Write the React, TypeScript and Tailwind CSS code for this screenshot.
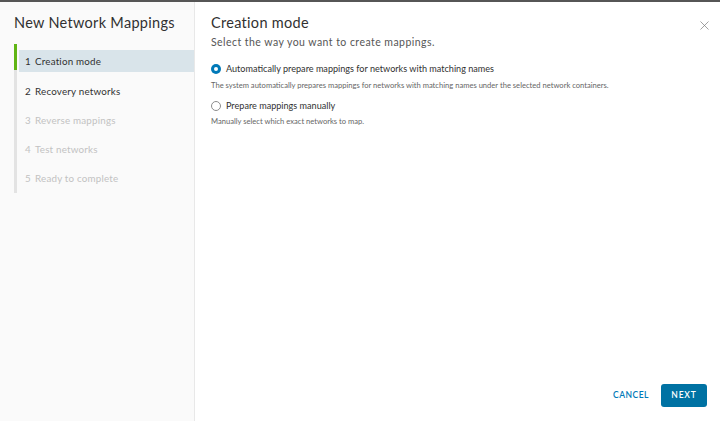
import { X } from 'lucide-react';

const steps = [
  { n: 1, label: 'Creation mode', state: 'active' },
  { n: 2, label: 'Recovery networks', state: 'enabled' },
  { n: 3, label: 'Reverse mappings', state: 'disabled' },
  { n: 4, label: 'Test networks', state: 'disabled' },
  { n: 5, label: 'Ready to complete', state: 'disabled' },
];

export default function App() {
  return (
    <div
      className="w-[720px] h-[421px] flex flex-col bg-white border-t-2 border-[#565656] overflow-hidden"
      style={{ fontFamily: 'Lato, "Liberation Sans", sans-serif' }}
    >
      <div className="flex flex-1 min-h-0">
        {/* Left nav */}
        <div className="w-[195px] shrink-0 bg-[#fafafa] border-r border-[#e8e8e8] pt-[10px]">
          <h1 className="pl-[14px] whitespace-nowrap text-[14.5px] leading-[22px] text-[#313131] tracking-[0.3px]">
            New Network Mappings
          </h1>
          <div className="mt-[13px] ml-[14px] border-l-[3px] border-[#e3e3e3] flex flex-col">
            {steps.map((s) => (
              <div key={s.n} className="relative h-[29.25px] flex items-center">
                {s.state === 'active' && (
                  <>
                    <div className="absolute -left-[3px] -top-[3px] w-[3px] h-[26px] bg-[#60b515]" />
                    <div className="absolute left-[2px] right-0 top-[3px] bottom-[4px] bg-[#d9e4ea]" />
                  </>
                )}
                <span
                  className={`relative pl-[8px] whitespace-nowrap text-[9.8px] tracking-[0.2px] ${
                    s.state === 'disabled' ? 'text-[#c2c2c2]' : 'text-[#313131]'
                  }`}
                >
                  <span className="inline-block w-[10px]">{s.n}</span>
                  {s.label}
                </span>
              </div>
            ))}
          </div>
        </div>

        {/* Content */}
        <div className="flex-1 flex flex-col pl-[16px] pr-[13px] pt-[10px] pb-[14px]">
          <div className="flex items-start justify-between">
            <h2 className="text-[14.5px] leading-[22px] text-[#313131] tracking-[0.3px]">Creation mode</h2>
            <X className="w-[15px] h-[15px] mt-[6px] -mr-[5px] text-[#777]" strokeWidth={1.1} />
          </div>
          <p className="text-[10.5px] leading-[16px] text-[#565656] tracking-[0.45px]">
            Select the way you want to create mappings.
          </p>

          <div className="mt-[13px] flex items-center gap-[5px]">
            <span className="w-[10px] h-[10px] rounded-full bg-[#0079b8] flex items-center justify-center">
              <span className="w-[4px] h-[4px] rounded-full bg-white" />
            </span>
            <span className="text-[9.1px] leading-[12px] text-[#313131] whitespace-nowrap">
              Automatically prepare mappings for networks with matching names
            </span>
          </div>
          <p className="mt-[5px] text-[7.6px] leading-[10px] text-[#666] whitespace-nowrap">
            The system automatically prepares mappings for networks with matching names under the selected network containers.
          </p>

          <div className="mt-[10px] flex items-center gap-[5px]">
            <span className="w-[10px] h-[10px] rounded-full border border-[#8c8c8c] bg-white" />
            <span className="text-[9.1px] leading-[12px] text-[#313131]">Prepare mappings manually</span>
          </div>
          <p className="mt-[4px] text-[7.6px] leading-[10px] text-[#666]">Manually select which exact networks to map.</p>

          <div className="mt-auto flex items-center justify-end gap-[7px]">
            <button className="px-[5px] h-[23px] text-[8.5px] font-semibold tracking-[0.5px] text-[#0079b8]">
              CANCEL
            </button>
            <button className="w-[46px] h-[23px] rounded-[3px] bg-[#0072a3] text-[8.5px] font-semibold tracking-[0.8px] text-white">
              NEXT
            </button>
          </div>
        </div>
      </div>
    </div>
  );
}
